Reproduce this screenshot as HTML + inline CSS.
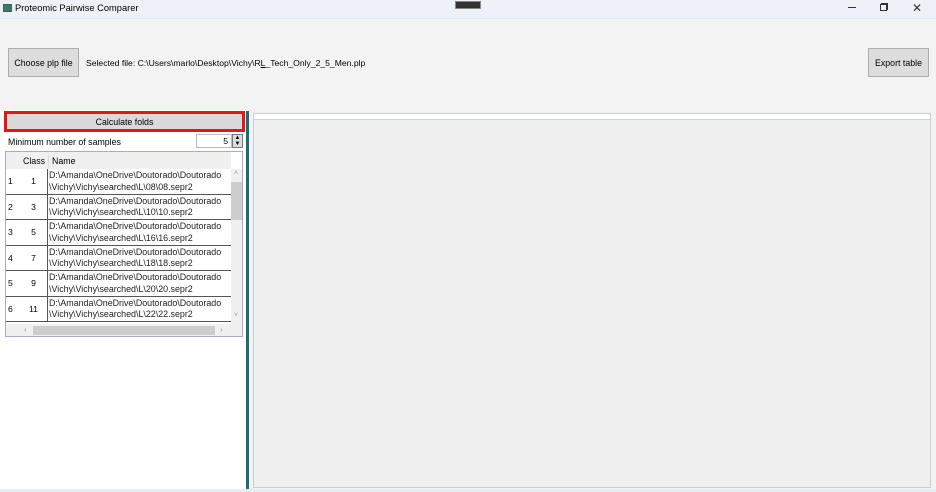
<!DOCTYPE html>
<html><head><meta charset="utf-8"><style>
*{box-sizing:border-box;margin:0;padding:0}
body{width:936px;height:492px;overflow:hidden;background:#f3f3f3;font-family:"Liberation Sans",sans-serif;font-size:8.6px;color:#000;position:relative}
.a{position:absolute}
.btn{position:absolute;background:#dddddd;border:1px solid #adadad;display:flex;align-items:center;justify-content:center;font-size:8.8px}
.row{position:absolute;left:0;width:225px;height:25.5px;border-bottom:1px solid #555}
.rh{position:absolute;left:0;top:0;width:14px;height:100%;display:flex;align-items:center;padding-left:2px;background:#fff}
.cl{position:absolute;left:14px;top:0;width:28px;height:100%;display:flex;align-items:center;justify-content:center;border-right:1px solid #555}
.nm{position:absolute;left:43px;top:1px;width:185px;line-height:11.5px;font-size:8.9px;white-space:nowrap;overflow:hidden;color:#222}
</style></head><body>
<div class="a" style="left:0;top:0;width:936px;height:18px;background:#eef2f8"></div>
<div class="a" style="left:3px;top:4px;width:9px;height:8px;border:1px solid #555;background:#3a7a6a"></div>
<div class="a" style="left:15px;top:3px;font-size:9.3px">Proteomic Pairwise Comparer</div>
<div class="a" style="left:455px;top:1px;width:26px;height:8px;background:#333;border:1px solid #888"></div>
<div class="a" style="left:848px;top:7px;width:8px;height:1px;background:#333"></div>
<div class="a" style="left:880px;top:4px;width:7px;height:7px;border:1px solid #333;box-shadow:1px -1px 0 #333"></div>
<div class="a" style="left:912px;top:1px;font-size:12px;color:#333">✕</div>
<div class="a" style="left:0;top:18px;width:936px;height:1px;background:#e4e6ea"></div>

<div class="btn" style="left:8px;top:48px;width:71px;height:29px">Choose plp file</div>
<div class="a" style="left:86px;top:58px">Selected file: C:\Users\marlo\Desktop\Vichy\R<u>L</u>_Tech_Only_2_5_Men.plp</div>
<div class="btn" style="left:868px;top:48px;width:61px;height:29px">Export table</div>

<div class="a" style="left:0;top:110px;width:247px;height:380px;background:#fff"></div>
<div class="btn" style="left:4px;top:111px;width:241px;height:21px;border:3px solid #e8141c;background:#dadada">Calculate folds</div>
<div class="a" style="left:8px;top:137px;font-size:8.8px">Minimum number of samples</div>
<div class="a" style="left:196px;top:134px;width:36px;height:14px;border:1px solid #bbb;background:#fff;text-align:right;padding-right:3px;line-height:12px">5</div>
<div class="a" style="left:232px;top:134px;width:11px;height:14px;border:1px solid #777;background:#ddd;font-size:6px;line-height:6px;text-align:center">▲<br>▼</div>

<div class="a" style="left:5px;top:151px;width:238px;height:186px;border:1px solid #aac;background:#fff;overflow:hidden">
 <div class="a" style="left:0;top:0;width:225px;height:17px;background:#f0f0f0"></div>
 <div class="a" style="left:17px;top:4px;font-size:8.8px">Class</div>
 <div class="a" style="left:46px;top:4px;font-size:8.8px">Name</div>
 <div class="a" style="left:42px;top:3px;width:1px;height:13px;background:#ddd"></div>
 <div class="a" style="left:0;top:17px;width:225px;height:155px;overflow:hidden">
  <div class="row" style="top:0"><div class="rh">1</div><div class="cl">1</div><div class="nm">D:\Amanda\OneDrive\Doutorado\Doutorado<br>\Vichy\Vichy\searched\L\08\08.sepr2</div></div>
  <div class="row" style="top:25.5px"><div class="rh">2</div><div class="cl">3</div><div class="nm">D:\Amanda\OneDrive\Doutorado\Doutorado<br>\Vichy\Vichy\searched\L\10\10.sepr2</div></div>
  <div class="row" style="top:51px"><div class="rh">3</div><div class="cl">5</div><div class="nm">D:\Amanda\OneDrive\Doutorado\Doutorado<br>\Vichy\Vichy\searched\L\16\16.sepr2</div></div>
  <div class="row" style="top:76.5px"><div class="rh">4</div><div class="cl">7</div><div class="nm">D:\Amanda\OneDrive\Doutorado\Doutorado<br>\Vichy\Vichy\searched\L\18\18.sepr2</div></div>
  <div class="row" style="top:102px"><div class="rh">5</div><div class="cl">9</div><div class="nm">D:\Amanda\OneDrive\Doutorado\Doutorado<br>\Vichy\Vichy\searched\L\20\20.sepr2</div></div>
  <div class="row" style="top:127.5px"><div class="rh">6</div><div class="cl">11</div><div class="nm">D:\Amanda\OneDrive\Doutorado\Doutorado<br>\Vichy\Vichy\searched\L\22\22.sepr2</div></div>
 </div>
 <div class="a" style="left:225px;top:17px;width:12px;height:155px;background:#f0f0f0"></div>
 <div class="a" style="left:225px;top:30px;width:12px;height:38px;background:#cdcdcd"></div>
 <div class="a" style="left:228px;top:18px;font-size:7px;color:#999">˄</div>
 <div class="a" style="left:228px;top:160px;font-size:7px;color:#999">˅</div>
 <div class="a" style="left:0;top:172px;width:237px;height:13px;background:#f0f0f0"></div>
 <div class="a" style="left:27px;top:174px;width:182px;height:9px;background:#cdcdcd"></div>
 <div class="a" style="left:18px;top:173px;font-size:8px;color:#999">‹</div>
 <div class="a" style="left:214px;top:173px;font-size:8px;color:#999">›</div>
</div>

<div class="a" style="left:246px;top:111px;width:3px;height:378px;background:#1f6b73"></div>
<div class="a" style="left:253px;top:113px;width:678px;height:375px;border:1px solid #c8cdd3;background:#f0f0f0"></div>
<div class="a" style="left:254px;top:114px;width:676px;height:6px;background:#fff;border-bottom:1px solid #d0d4d8"></div>
<div class="a" style="left:0;top:489px;width:936px;height:3px;background:#e8ebef"></div>
</body></html>
